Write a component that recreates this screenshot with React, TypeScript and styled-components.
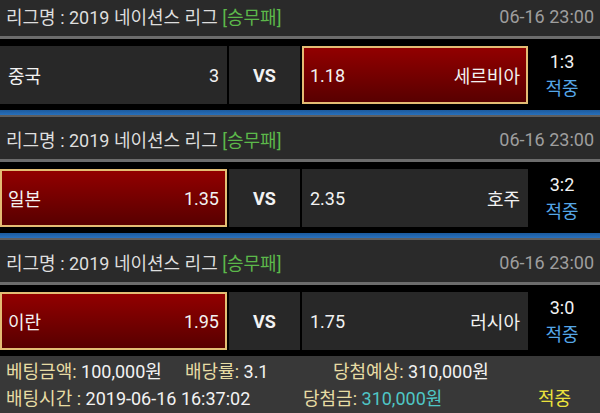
import styled, { createGlobalStyle } from 'styled-components';

type Side = 'home' | 'away';

type Match = {
  home: string;
  away: string;
  homeOdds: string;
  awayOdds: string;
  picked: Side;
  score: string;
};

const matches: Match[] = [
  { home: '중국', away: '세르비아', homeOdds: '3', awayOdds: '1.18', picked: 'away', score: '1:3' },
  { home: '일본', away: '호주', homeOdds: '1.35', awayOdds: '2.35', picked: 'home', score: '3:2' },
  { home: '이란', away: '러시아', homeOdds: '1.95', awayOdds: '1.75', picked: 'home', score: '3:0' },
];

const GlobalStyle = createGlobalStyle`
  body {
    margin: 0;
    background: #000;
    font-family: Roboto, "Noto Sans CJK KR", sans-serif;
  }
`;

export default function App() {
  return (
    <>
      <GlobalStyle />
      <Page>
        <List>
          {matches.map((m, i) => (
            <Block key={i}>
              <Header>
                <span>
                  리그명 : 2019 네이션스 리그 <Tag>[승무패]</Tag>
                </span>
                <DateText>06-16 23:00</DateText>
              </Header>
              <Row>
                <TeamCell $picked={m.picked === 'home'}>
                  <span>{m.home}</span>
                  <span>{m.homeOdds}</span>
                </TeamCell>
                <VsCell>VS</VsCell>
                <TeamCell $picked={m.picked === 'away'}>
                  <span>{m.awayOdds}</span>
                  <span>{m.away}</span>
                </TeamCell>
                <ScoreCell>
                  <span>{m.score}</span>
                  <Hit>적중</Hit>
                </ScoreCell>
              </Row>
              {i < matches.length - 1 && <Divider />}
            </Block>
          ))}
        </List>
        <Summary>
          <SummaryRow>
            <Item $width={179}>
              <Label>베팅금액:</Label> 100,000원
            </Item>
            <Item $width={148}>
              <Label>배당률:</Label> 3.1
            </Item>
            <Item>
              <Label>당첨예상:</Label> 310,000원
            </Item>
          </SummaryRow>
          <SummaryRow>
            <Item $width={297}>
              <Label>배팅시간 :</Label> 2019-06-16 16:37:02
            </Item>
            <Item $width={235}>
              <Label>당첨금:</Label> <Prize>310,000원</Prize>
            </Item>
            <Result>적중</Result>
          </SummaryRow>
        </Summary>
      </Page>
    </>
  );
}

const Page = styled.div`
  width: 600px;
  height: 413px;
  overflow: hidden;
  background: #000;
  display: flex;
  flex-direction: column;
`;

const List = styled.div`
  margin-top: -6px;
  display: flex;
  flex-direction: column;
`;

const Block = styled.div`
  display: flex;
  flex-direction: column;
`;

const Header = styled.div`
  height: 45px;
  box-sizing: border-box;
  display: flex;
  align-items: center;
  justify-content: space-between;
  padding: 2px 6px 0 6px;
  background: #2a2a2a;
  border-bottom: 3px solid #6c6c6c;
  color: #dedede;
  font-size: 18px;
`;

const Tag = styled.span`
  color: #5cb84a;
`;

const DateText = styled.span`
  color: #9e9e9e;
`;

const Row = styled.div`
  display: grid;
  grid-template-columns: 227px 71px 226px 1fr;
  column-gap: 2px;
  height: 58px;
  margin: 7px 0 6px;
  font-size: 18px;
  color: #f2f2f2;
`;

const TeamCell = styled.div<{ $picked: boolean }>`
  display: flex;
  align-items: center;
  justify-content: space-between;
  box-sizing: border-box;
  padding: 0 6px;
  background: ${({ $picked }) =>
    $picked ? 'linear-gradient(#920000, #580000)' : '#282828'};
  border: 2px solid ${({ $picked }) => ($picked ? '#e3bd74' : 'transparent')};
`;

const VsCell = styled.div`
  display: flex;
  align-items: center;
  justify-content: center;
  background: #282828;
  font-weight: bold;
  font-size: 18px;
`;

const ScoreCell = styled.div`
  display: flex;
  flex-direction: column;
  align-items: center;
  justify-content: center;
  gap: 7px;
  padding-right: 6px;
  line-height: 1.1;
`;

const Hit = styled.span`
  color: #55a6e6;
`;

const Divider = styled.div`
  height: 5px;
  background: linear-gradient(#1c5a9c, #2870bc);
  border-bottom: 2px solid #5e5e5e;
`;

const Summary = styled.div`
  flex: 1;
  background: #383838;
  display: flex;
  flex-direction: column;
  justify-content: center;
  padding: 1px 6px 0;
  font-size: 18px;
  line-height: 27px;
  color: #f2f2f2;
`;

const SummaryRow = styled.div`
  display: flex;
  align-items: center;
`;

const Item = styled.span<{ $width?: number }>`
  width: ${({ $width }) => ($width ? `${$width}px` : 'auto')};
  white-space: nowrap;
`;

const Label = styled.span`
  color: #e7dca4;
`;

const Prize = styled.span`
  color: #4fc6c6;
`;

const Result = styled.span`
  color: #ece23c;
`;
